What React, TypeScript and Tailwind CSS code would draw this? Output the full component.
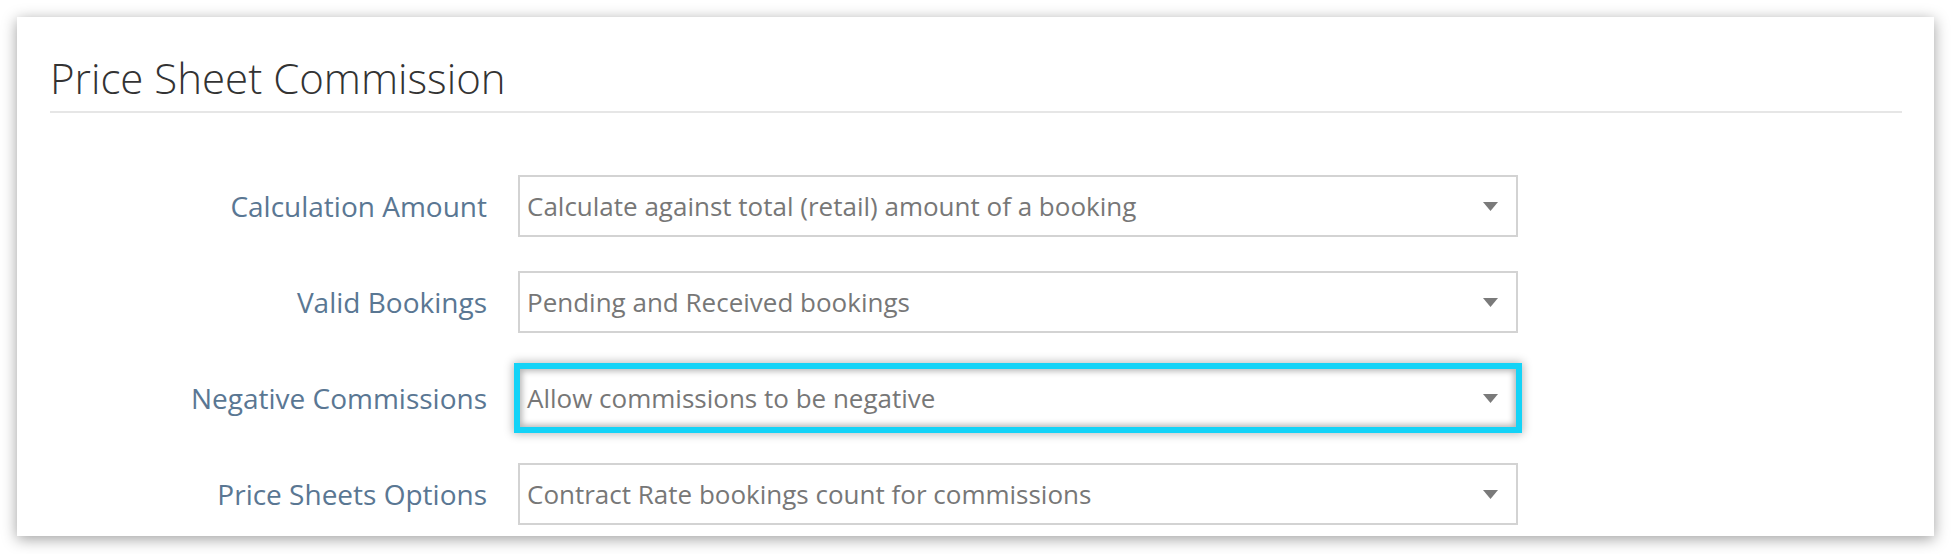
const rows = [
  { label: "Calculation Amount", value: "Calculate against total (retail) amount of a booking" },
  { label: "Valid Bookings", value: "Pending and Received bookings" },
  { label: "Negative Commissions", value: "Allow commissions to be negative", focused: true },
  { label: "Price Sheets Options", value: "Contract Rate bookings count for commissions" },
];

function Caret() {
  return (
    <svg width="15" height="9" viewBox="0 0 15 9" className="shrink-0">
      <polygon points="0,0 15,0 7.5,9" fill="#7a7a7a" />
    </svg>
  );
}

export default function App() {
  return (
    <div
      className="w-[1952px] h-[554px] bg-white p-[17px] pr-[18px]"
      style={{ fontFamily: '"Open Sans", "Liberation Sans", sans-serif' }}
    >
      <div className="h-[519px] bg-white shadow-[0_3px_14px_rgba(0,0,0,0.38)] pl-[33px] pr-[32px] pt-[36px]">
        <h1 className="text-[42px] leading-[50px] font-light text-[#333] pb-2 border-b-2 border-[#e6e6e6]">
          Price Sheet Commission
        </h1>

        <div className="mt-[62px] flex flex-col gap-[34px]">
          {rows.map((r) => (
            <div key={r.label} className="flex items-center">
              <div className="w-[468px] pr-[31px] text-right text-[28px] text-[#5a7793]">
                {r.label}
              </div>
              <div
                className={
                  r.focused
                    ? "w-[1000px] h-[62px] flex items-center justify-between pl-[7px] pr-[18px] border-2 border-[#14d3f7] bg-white shadow-[0_0_0_4px_#14d3f7,0_0_9px_5px_rgba(0,0,0,0.28),inset_0_0_6px_2px_rgba(0,0,0,0.3)]"
                    : "w-[1000px] h-[62px] flex items-center justify-between pl-[7px] pr-[18px] border-2 border-[#d3d3d3] bg-white"
                }
              >
                <span className="text-[26px] text-[#777]">{r.value}</span>
                <Caret />
              </div>
            </div>
          ))}
        </div>
      </div>
    </div>
  );
}
